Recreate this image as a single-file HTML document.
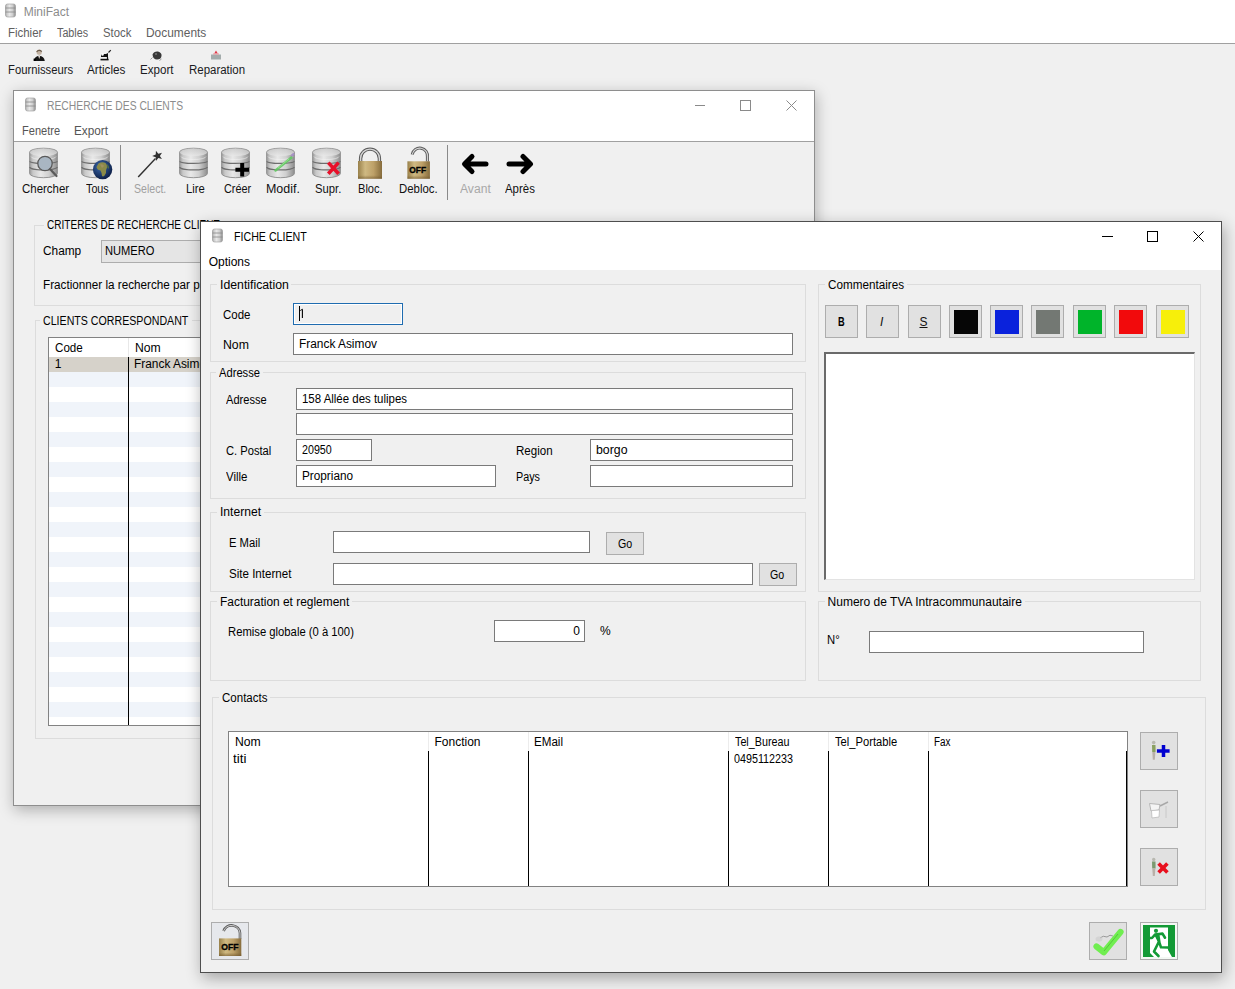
<!DOCTYPE html><html><head><meta charset="utf-8"><style>
html,body{margin:0;padding:0;width:1235px;height:989px;overflow:hidden;background:#f0f0f0;position:relative;font-family:"Liberation Sans",sans-serif}
div{position:absolute;box-sizing:border-box}
.t{white-space:nowrap;transform-origin:0 0}
svg{position:absolute;overflow:visible}
</style></head><body>
<svg width="0" height="0" style="position:absolute"><defs>
<linearGradient id="cyl" x1="0" x2="1" y1="0" y2="0">
<stop offset="0" stop-color="#9a9a9a"/><stop offset="0.12" stop-color="#c8c8c8"/><stop offset="0.4" stop-color="#e8e8e8"/><stop offset="0.7" stop-color="#cfcfcf"/><stop offset="1" stop-color="#8e8e8e"/></linearGradient>
<linearGradient id="cyltop" x1="0" x2="0" y1="0" y2="1">
<stop offset="0" stop-color="#c8c8c8"/><stop offset="1" stop-color="#e8e8e8"/></linearGradient>
<linearGradient id="gold" x1="0" x2="1" y1="0" y2="0">
<stop offset="0" stop-color="#98804a"/><stop offset="0.3" stop-color="#cfb982"/><stop offset="0.65" stop-color="#bda068"/><stop offset="1" stop-color="#866c3c"/></linearGradient>
<linearGradient id="goldv" x1="0" x2="0" y1="0" y2="1">
<stop offset="0" stop-color="#b8a068" stop-opacity="0"/><stop offset="0.8" stop-color="#7a6030" stop-opacity="0"/><stop offset="1" stop-color="#6a5028" stop-opacity="0.6"/></linearGradient>
<linearGradient id="shk" x1="0" x2="1" y1="0" y2="0">
<stop offset="0" stop-color="#6a6a6a"/><stop offset="0.5" stop-color="#d0d0d0"/><stop offset="1" stop-color="#5a5a5a"/></linearGradient>
<radialGradient id="globe" cx="0.4" cy="0.35" r="0.7">
<stop offset="0" stop-color="#3a6ab0"/><stop offset="1" stop-color="#0a1a40"/></radialGradient>
</defs></svg>
<div style="left:0px;top:0px;width:1235px;height:43px;background:#fff;"></div>
<div style="left:0px;top:43px;width:1235px;height:1px;background:#a0a0a0;"></div>
<svg style="left:5px;top:3px" width="12" height="15" viewBox="0 0 12 15"><rect x="0.5" y="1" width="10" height="13" rx="2" fill="url(#cyl)" stroke="#999" stroke-width="0.6"/><path d="M0.5,5 H10.5 M0.5,9 H10.5" stroke="#888" stroke-width="0.8"/></svg>
<div class="t" style="left:23.70px;top:6px;font-size:12px;line-height:12px;color:#8c8c8c;">MiniFact</div>
<div class="t" style="left:7.60px;top:27px;font-size:12px;line-height:12px;color:#606060;transform:scaleX(0.9528);">Fichier</div>
<div class="t" style="left:56.80px;top:27px;font-size:12px;line-height:12px;color:#606060;transform:scaleX(0.8963);">Tables</div>
<div class="t" style="left:102.60px;top:27px;font-size:12px;line-height:12px;color:#606060;transform:scaleX(0.9435);">Stock</div>
<div class="t" style="left:145.50px;top:27px;font-size:12px;line-height:12px;color:#606060;transform:scaleX(0.9934);">Documents</div>
<div class="t" style="left:7.60px;top:64px;font-size:12px;line-height:12px;color:#1a1a22;transform:scaleX(0.9395);">Fournisseurs</div>
<div class="t" style="left:87.40px;top:64px;font-size:12px;line-height:12px;color:#1a1a22;transform:scaleX(0.9771);">Articles</div>
<div class="t" style="left:140.40px;top:64px;font-size:12px;line-height:12px;color:#1a1a22;transform:scaleX(0.9654);">Export</div>
<div class="t" style="left:188.60px;top:64px;font-size:12px;line-height:12px;color:#1a1a22;transform:scaleX(0.9557);">Reparation</div>
<svg style="left:33px;top:49px" width="13" height="13" viewBox="0 0 13 13"><circle cx="6.2" cy="3.2" r="2.6" fill="#c4b4a4"/><path d="M3.6,2.8 Q6,0 8.8,2.6" stroke="#6a5a4a" stroke-width="1.2" fill="none"/><path d="M1,12 Q1.5,7 6.2,6.8 Q11,7 11.8,12 Z" fill="#151515"/><path d="M5.2,7 L6.2,10 L7.2,7 Z" fill="#e8e0d8"/><rect x="0.6" y="9.6" width="2.2" height="2.4" fill="#000"/></svg>
<svg style="left:100px;top:49px" width="13" height="13" viewBox="0 0 13 13"><path d="M1,5 H6 L8,4 L8,8 L1,8 Z" fill="#111"/><circle cx="2.5" cy="5.5" r="1.3" fill="#fff"/><path d="M0.5,10.6 H8.6" stroke="#111" stroke-width="1.6"/><path d="M7.5,8 L7.5,10.5" stroke="#111" stroke-width="1.2"/><path d="M8.5,3.5 L10.8,1.2" stroke="#222" stroke-width="1.2"/></svg>
<svg style="left:150px;top:50px" width="13" height="12" viewBox="0 0 13 12"><path d="M2.5,4.5 Q4,1 8,1.5 Q12,2.5 11.5,6 Q11,9.5 7,9.5 Q3,9.5 2.5,4.5 Z" fill="#383838"/><circle cx="6" cy="4" r="1" fill="#777"/><path d="M0.5,9.5 L2.5,7.5 M9.5,10.5 L11.5,9" stroke="#888" stroke-width="0.8"/></svg>
<svg style="left:210px;top:49px" width="13" height="12" viewBox="0 0 13 12"><path d="M1,5.5 H11 V10.5 H1 Z" fill="#a4acac"/><path d="M1,5.5 H11" stroke="#c8d0d0" stroke-width="1"/><path d="M4.2,4.5 L6,1.5 L7.8,4.5 Z" fill="#e03848"/><path d="M3,5 H9" stroke="#e89098" stroke-width="1"/></svg>
<div style="left:13px;top:90px;width:802px;height:716px;background:#f0f0f0;border:1px solid #8e8e8e;box-shadow:1px 4px 14px rgba(0,0,0,0.28);"></div>
<div style="left:14px;top:91px;width:800px;height:50px;background:#fff;"></div>
<div style="left:14px;top:141px;width:800px;height:1px;background:#a0a0a0;"></div>
<svg style="left:25px;top:97px" width="12" height="15" viewBox="0 0 12 15"><rect x="0.5" y="1" width="10" height="13" rx="2" fill="url(#cyl)" stroke="#999" stroke-width="0.6"/><path d="M0.5,5 H10.5 M0.5,9 H10.5" stroke="#888" stroke-width="0.8"/></svg>
<div class="t" style="left:46.90px;top:100px;font-size:12px;line-height:12px;color:#8c8c8c;transform:scaleX(0.8608);">RECHERCHE DES CLIENTS</div>
<div class="t" style="left:21.70px;top:125px;font-size:12px;line-height:12px;color:#555;transform:scaleX(0.9227);">Fenetre</div>
<div class="t" style="left:74.10px;top:125px;font-size:12px;line-height:12px;color:#555;transform:scaleX(0.9798);">Export</div>
<div style="left:695px;top:105px;width:10px;height:1px;background:#8a8a8a;"></div>
<div style="left:740px;top:100px;width:11px;height:11px;border:1px solid #8a8a8a;"></div>
<svg style="left:786px;top:100px" width="11" height="11" viewBox="0 0 11 11"><path d="M0.5,0.5 L10.5,10.5 M10.5,0.5 L0.5,10.5" stroke="#8a8a8a" stroke-width="1"/></svg>
<svg style="left:29px;top:148px" width="30" height="31" viewBox="0 0 30 31"><path d="M0.6,4.2 A13.9,4 0 0 1 28.4,4.2 V25.5 A13.9,4.2 0 0 1 0.6,25.5 Z" fill="url(#cyl)" stroke="#8c8c8c" stroke-width="0.9"/>
<ellipse cx="14.5" cy="4.3" rx="13.6" ry="3.7" fill="url(#cyltop)" opacity="0.75"/>
<path d="M0.8,13.2 A13.7,2.2 0 0 0 28.2,13.2" fill="none" stroke="#6e6e6e" stroke-width="1.2"/>
<path d="M0.8,19 A13.7,2.9 0 0 0 28.2,19" fill="none" stroke="#6e6e6e" stroke-width="1.2"/>
<path d="M2,8.5 A12.5,3 0 0 0 27,8.5" fill="none" stroke="#f4f4f4" stroke-width="0.8" opacity="0.7"/><circle cx="16" cy="15.5" r="7.2" fill="#a9b6c2" stroke="#5a5a5a" stroke-width="1.3"/><path d="M21,21 L27.5,28" stroke="#5a5a5a" stroke-width="2.2" stroke-linecap="round"/></svg>
<svg style="left:81px;top:148px" width="32" height="31" viewBox="0 0 32 31"><path d="M0.6,4.2 A13.9,4 0 0 1 28.4,4.2 V25.5 A13.9,4.2 0 0 1 0.6,25.5 Z" fill="url(#cyl)" stroke="#8c8c8c" stroke-width="0.9"/>
<ellipse cx="14.5" cy="4.3" rx="13.6" ry="3.7" fill="url(#cyltop)" opacity="0.75"/>
<path d="M0.8,13.2 A13.7,2.2 0 0 0 28.2,13.2" fill="none" stroke="#6e6e6e" stroke-width="1.2"/>
<path d="M0.8,19 A13.7,2.9 0 0 0 28.2,19" fill="none" stroke="#6e6e6e" stroke-width="1.2"/>
<path d="M2,8.5 A12.5,3 0 0 0 27,8.5" fill="none" stroke="#f4f4f4" stroke-width="0.8" opacity="0.7"/><circle cx="21.6" cy="21.6" r="9.7" fill="url(#globe)"/><path d="M17.5,15.5 Q21,13.5 24.5,15 Q26.5,17 26,19.5 Q24.5,22 25,25 Q23,29.5 21,28 Q20.5,24 19.5,22.5 Q16,22 15.5,19 Z" fill="#8a8a48"/><path d="M19,16.5 Q22,15.5 23,18 L21,20 Z" fill="#a09060"/><path d="M26,16 Q28.5,18 28,21 L26.5,19.5 Z" fill="#5a7a3a"/></svg>
<div style="left:120px;top:145px;width:1px;height:55px;background:#8a8a8a;"></div>
<svg style="left:137px;top:150px" width="27" height="28" viewBox="0 0 27 28"><path d="M1.2,27 L18.5,8.5" stroke="#303030" stroke-width="1.4"/><path d="M18.93,0.76 L21.31,3.71 L24.97,2.73 L22.90,5.90 L24.97,9.07 L21.31,8.09 L18.93,11.04 L18.74,7.25 L15.20,5.90 L18.74,4.55 Z" fill="#303030"/></svg>
<svg style="left:179px;top:148px" width="30" height="31" viewBox="0 0 30 31"><path d="M0.6,4.2 A13.9,4 0 0 1 28.4,4.2 V25.5 A13.9,4.2 0 0 1 0.6,25.5 Z" fill="url(#cyl)" stroke="#8c8c8c" stroke-width="0.9"/>
<ellipse cx="14.5" cy="4.3" rx="13.6" ry="3.7" fill="url(#cyltop)" opacity="0.75"/>
<path d="M0.8,13.2 A13.7,2.2 0 0 0 28.2,13.2" fill="none" stroke="#6e6e6e" stroke-width="1.2"/>
<path d="M0.8,19 A13.7,2.9 0 0 0 28.2,19" fill="none" stroke="#6e6e6e" stroke-width="1.2"/>
<path d="M2,8.5 A12.5,3 0 0 0 27,8.5" fill="none" stroke="#f4f4f4" stroke-width="0.8" opacity="0.7"/></svg>
<svg style="left:221px;top:148px" width="30" height="31" viewBox="0 0 30 31"><path d="M0.6,4.2 A13.9,4 0 0 1 28.4,4.2 V25.5 A13.9,4.2 0 0 1 0.6,25.5 Z" fill="url(#cyl)" stroke="#8c8c8c" stroke-width="0.9"/>
<ellipse cx="14.5" cy="4.3" rx="13.6" ry="3.7" fill="url(#cyltop)" opacity="0.75"/>
<path d="M0.8,13.2 A13.7,2.2 0 0 0 28.2,13.2" fill="none" stroke="#6e6e6e" stroke-width="1.2"/>
<path d="M0.8,19 A13.7,2.9 0 0 0 28.2,19" fill="none" stroke="#6e6e6e" stroke-width="1.2"/>
<path d="M2,8.5 A12.5,3 0 0 0 27,8.5" fill="none" stroke="#f4f4f4" stroke-width="0.8" opacity="0.7"/><path d="M14.4,21.8 H28 M21.2,15 V28.6" stroke="#000" stroke-width="4"/></svg>
<svg style="left:266px;top:148px" width="30" height="31" viewBox="0 0 30 31"><path d="M0.6,4.2 A13.9,4 0 0 1 28.4,4.2 V25.5 A13.9,4.2 0 0 1 0.6,25.5 Z" fill="url(#cyl)" stroke="#8c8c8c" stroke-width="0.9"/>
<ellipse cx="14.5" cy="4.3" rx="13.6" ry="3.7" fill="url(#cyltop)" opacity="0.75"/>
<path d="M0.8,13.2 A13.7,2.2 0 0 0 28.2,13.2" fill="none" stroke="#6e6e6e" stroke-width="1.2"/>
<path d="M0.8,19 A13.7,2.9 0 0 0 28.2,19" fill="none" stroke="#6e6e6e" stroke-width="1.2"/>
<path d="M2,8.5 A12.5,3 0 0 0 27,8.5" fill="none" stroke="#f4f4f4" stroke-width="0.8" opacity="0.7"/><path d="M9.5,22.5 L25.5,9.5" stroke="#62c862" stroke-width="2.4" stroke-linecap="round" opacity="0.9"/><path d="M12,20 L23,11" stroke="#a8f0a0" stroke-width="0.8" opacity="0.8"/><path d="M25.5,8 L28,5.5" stroke="#a890c8" stroke-width="2.2"/></svg>
<svg style="left:312px;top:148px" width="30" height="31" viewBox="0 0 30 31"><path d="M0.6,4.2 A13.9,4 0 0 1 28.4,4.2 V25.5 A13.9,4.2 0 0 1 0.6,25.5 Z" fill="url(#cyl)" stroke="#8c8c8c" stroke-width="0.9"/>
<ellipse cx="14.5" cy="4.3" rx="13.6" ry="3.7" fill="url(#cyltop)" opacity="0.75"/>
<path d="M0.8,13.2 A13.7,2.2 0 0 0 28.2,13.2" fill="none" stroke="#6e6e6e" stroke-width="1.2"/>
<path d="M0.8,19 A13.7,2.9 0 0 0 28.2,19" fill="none" stroke="#6e6e6e" stroke-width="1.2"/>
<path d="M2,8.5 A12.5,3 0 0 0 27,8.5" fill="none" stroke="#f4f4f4" stroke-width="0.8" opacity="0.7"/><path d="M16.3,14.6 L26.6,25.8 M26.6,14.6 L16.3,25.8" stroke="#e8102a" stroke-width="3.6"/></svg>
<svg style="left:357px;top:147px" width="26" height="33" viewBox="0 0 26 33"><path d="M3.6,14.5 V11.5 A9.4,9.4 0 0 1 22.4,11.5 V14.5" fill="none" stroke="#5a5a5a" stroke-width="3.4"/><path d="M3.6,14.5 V11.5 A9.4,9.4 0 0 1 22.4,11.5 V14.5" fill="none" stroke="#d8d8d8" stroke-width="1.4"/><rect x="1" y="14" width="24" height="17.7" fill="url(#gold)"/><rect x="1" y="14" width="24" height="17.7" fill="url(#goldv)"/></svg>
<svg style="left:406px;top:147px" width="26" height="33" viewBox="0 0 26 33"><path d="M6.2,7.5 A7.7,7.7 0 0 1 21.4,10.2 V14.5" fill="none" stroke="#5a5a5a" stroke-width="3"/><path d="M6.2,7.5 A7.7,7.7 0 0 1 21.4,10.2 V14.5" fill="none" stroke="#d8d8d8" stroke-width="1.1"/><rect x="1.4" y="14.3" width="22.5" height="17.4" fill="url(#gold)"/><rect x="1.4" y="14.3" width="22.5" height="17.4" fill="url(#goldv)"/><text x="11.7" y="25.9" text-anchor="middle" font-family="Liberation Sans" font-weight="bold" font-size="8.4" fill="#000" stroke="#000" stroke-width="0.35">OFF</text></svg>
<div style="left:447px;top:145px;width:1px;height:55px;background:#8a8a8a;"></div>
<svg style="left:460px;top:153px" width="30" height="23" viewBox="0 0 30 23"><path d="M26,11 H6 M12,3.5 L4.5,11 L12,18.5" fill="none" stroke="#000" stroke-width="5" stroke-linecap="round" stroke-linejoin="round"/></svg>
<svg style="left:505px;top:153px" width="30" height="23" viewBox="0 0 30 23"><path d="M4,11 H24 M18,3.5 L25.5,11 L18,18.5" fill="none" stroke="#000" stroke-width="5" stroke-linecap="round" stroke-linejoin="round"/></svg>
<div class="t" style="left:21.80px;top:183px;font-size:12px;line-height:12px;color:#111;transform:scaleX(0.9555);">Chercher</div>
<div class="t" style="left:86.20px;top:183px;font-size:12px;line-height:12px;color:#111;transform:scaleX(0.8972);">Tous</div>
<div class="t" style="left:133.50px;top:183px;font-size:12px;line-height:12px;color:#a0a0a0;transform:scaleX(0.8801);">Select.</div>
<div class="t" style="left:185.50px;top:183px;font-size:12px;line-height:12px;color:#111;transform:scaleX(0.9400);">Lire</div>
<div class="t" style="left:223.80px;top:183px;font-size:12px;line-height:12px;color:#111;transform:scaleX(0.9067);">Créer</div>
<div class="t" style="left:265.60px;top:183px;font-size:12px;line-height:12px;color:#111;transform:scaleX(1.0367);">Modif.</div>
<div class="t" style="left:314.50px;top:183px;font-size:12px;line-height:12px;color:#111;transform:scaleX(0.9393);">Supr.</div>
<div class="t" style="left:357.60px;top:183px;font-size:12px;line-height:12px;color:#111;transform:scaleX(0.9251);">Bloc.</div>
<div class="t" style="left:398.70px;top:183px;font-size:12px;line-height:12px;color:#111;transform:scaleX(0.9484);">Debloc.</div>
<div class="t" style="left:460.00px;top:183px;font-size:12px;line-height:12px;color:#a8a8a8;transform:scaleX(1.0098);">Avant</div>
<div class="t" style="left:505.40px;top:183px;font-size:12px;line-height:12px;color:#111;transform:scaleX(0.9521);">Après</div>
<div style="left:34px;top:225px;width:777px;height:81px;border:1px solid #dcdcdc;"></div>
<div style="left:43.7px;top:223px;width:178.5px;height:5px;background:#f0f0f0;"></div>
<div class="t" style="left:46.70px;top:219px;font-size:12px;line-height:12px;color:#000;transform:scaleX(0.8374);">CRITERES DE RECHERCHE CLIENT</div>
<div class="t" style="left:42.50px;top:245px;font-size:12px;line-height:12px;color:#000;transform:scaleX(0.9871);">Champ</div>
<div style="left:101px;top:240px;width:300px;height:23px;background:#e5e5e5;border:1px solid #adadad;"></div>
<div class="t" style="left:105.30px;top:245px;font-size:12px;line-height:12px;color:#000;transform:scaleX(0.9268);">NUMERO</div>
<div class="t" style="left:42.50px;top:279px;font-size:12px;line-height:12px;color:#000;transform:scaleX(0.9751);">Fractionner la recherche par page</div>
<div style="left:35px;top:320px;width:776px;height:419px;border:1px solid #dcdcdc;"></div>
<div style="left:40.4px;top:318px;width:151.3px;height:5px;background:#f0f0f0;"></div>
<div class="t" style="left:43.40px;top:315px;font-size:12px;line-height:12px;color:#000;transform:scaleX(0.8860);">CLIENTS CORRESPONDANT</div>
<div style="left:48px;top:337px;width:600px;height:389px;background:#fff;border:1px solid #828282;"></div>
<div style="left:49px;top:357px;width:500px;height:15px;background:#d6d2ca;"></div>
<div style="left:49px;top:372px;width:500px;height:15px;background:#f0f4fa;"></div>
<div style="left:49px;top:402px;width:500px;height:15px;background:#f0f4fa;"></div>
<div style="left:49px;top:432px;width:500px;height:15px;background:#f0f4fa;"></div>
<div style="left:49px;top:462px;width:500px;height:15px;background:#f0f4fa;"></div>
<div style="left:49px;top:492px;width:500px;height:15px;background:#f0f4fa;"></div>
<div style="left:49px;top:522px;width:500px;height:15px;background:#f0f4fa;"></div>
<div style="left:49px;top:552px;width:500px;height:15px;background:#f0f4fa;"></div>
<div style="left:49px;top:582px;width:500px;height:15px;background:#f0f4fa;"></div>
<div style="left:49px;top:612px;width:500px;height:15px;background:#f0f4fa;"></div>
<div style="left:49px;top:642px;width:500px;height:15px;background:#f0f4fa;"></div>
<div style="left:49px;top:672px;width:500px;height:15px;background:#f0f4fa;"></div>
<div style="left:49px;top:702px;width:500px;height:15px;background:#f0f4fa;"></div>
<div style="left:49px;top:725px;width:500px;height:1px;background:#828282;"></div>
<div style="left:128px;top:357px;width:1px;height:368px;background:#000;"></div>
<div style="left:128px;top:338px;width:1px;height:19px;background:#e8e8e8;"></div>
<div class="t" style="left:54.50px;top:342px;font-size:12px;line-height:12px;color:#000;transform:scaleX(0.9686);">Code</div>
<div class="t" style="left:134.50px;top:342px;font-size:12px;line-height:12px;color:#000;transform:scaleX(1.0158);">Nom</div>
<div class="t" style="left:54.80px;top:358px;font-size:12px;line-height:12px;color:#000;">1</div>
<div class="t" style="left:133.60px;top:358px;font-size:12px;line-height:12px;color:#000;transform:scaleX(0.9911);">Franck Asimov</div>
<div style="left:200px;top:221px;width:1022px;height:752px;background:#f0f0f0;border:1px solid #4e4e4e;box-shadow:2px 5px 15px rgba(0,0,0,0.32);"></div>
<div style="left:201px;top:222px;width:1020px;height:48px;background:#fff;"></div>
<svg style="left:212px;top:228px" width="12" height="15" viewBox="0 0 12 15"><rect x="0.5" y="1" width="10" height="13" rx="2" fill="url(#cyl)" stroke="#999" stroke-width="0.6"/><path d="M0.5,5 H10.5 M0.5,9 H10.5" stroke="#888" stroke-width="0.8"/></svg>
<div class="t" style="left:233.70px;top:231px;font-size:12px;line-height:12px;color:#000;transform:scaleX(0.8878);">FICHE CLIENT</div>
<div class="t" style="left:208.70px;top:256px;font-size:12px;line-height:12px;color:#000;">Options</div>
<div style="left:1102px;top:236px;width:11px;height:1px;background:#000;"></div>
<div style="left:1147px;top:231px;width:11px;height:11px;border:1px solid #000;"></div>
<svg style="left:1193px;top:231px" width="11" height="11" viewBox="0 0 11 11"><path d="M0.5,0.5 L10.5,10.5 M10.5,0.5 L0.5,10.5" stroke="#000" stroke-width="1"/></svg>
<div style="left:210px;top:284px;width:596px;height:78px;border:1px solid #dcdcdc;"></div>
<div style="left:216.5px;top:282px;width:74.9px;height:5px;background:#f0f0f0;"></div>
<div class="t" style="left:219.50px;top:279px;font-size:12px;line-height:12px;color:#000;transform:scaleX(1.0223);">Identification</div>
<div class="t" style="left:222.60px;top:309px;font-size:12px;line-height:12px;color:#000;transform:scaleX(0.9547);">Code</div>
<div style="left:293px;top:303px;width:110px;height:22px;border:1px solid #1f6cb0;background:#efefef;"></div>
<div style="left:294px;top:304px;width:108px;height:20px;border:1px solid #fff;"></div>
<div style="left:299px;top:306px;width:1px;height:15px;background:#000;"></div>
<svg style="left:299px;top:308px" width="6" height="11" viewBox="0 0 6 11"><path d="M3.4,1.3 V10" stroke="#000" stroke-width="1.1"/><path d="M1.2,2.6 L3.4,1.2" stroke="#000" stroke-width="0.9"/></svg>
<div class="t" style="left:222.60px;top:339px;font-size:12px;line-height:12px;color:#000;transform:scaleX(1.0237);">Nom</div>
<div style="left:293px;top:333px;width:500px;height:22px;border:1px solid #7a7a7a;background:#fff;"></div>
<div class="t" style="left:299.00px;top:338px;font-size:12px;line-height:12px;color:#000;transform:scaleX(0.9911);">Franck Asimov</div>
<div style="left:818px;top:284px;width:383px;height:308px;border:1px solid #dcdcdc;"></div>
<div style="left:824.5px;top:282px;width:82px;height:5px;background:#f0f0f0;"></div>
<div class="t" style="left:827.50px;top:279px;font-size:12px;line-height:12px;color:#000;transform:scaleX(0.9744);">Commentaires</div>
<div style="left:825px;top:305px;width:33px;height:33px;border:1px solid #adadad;background:#e1e1e1;"></div>
<div style="left:866px;top:305px;width:33px;height:33px;border:1px solid #adadad;background:#e1e1e1;"></div>
<div style="left:908px;top:305px;width:33px;height:33px;border:1px solid #adadad;background:#e1e1e1;"></div>
<div style="left:949px;top:305px;width:33px;height:33px;border:1px solid #adadad;background:#e1e1e1;"></div>
<div style="left:954px;top:310px;width:24px;height:24px;background:#060606;"></div>
<div style="left:990px;top:305px;width:33px;height:33px;border:1px solid #adadad;background:#e1e1e1;"></div>
<div style="left:995px;top:310px;width:24px;height:24px;background:#0a22dc;"></div>
<div style="left:1031px;top:305px;width:33px;height:33px;border:1px solid #adadad;background:#e1e1e1;"></div>
<div style="left:1036px;top:310px;width:24px;height:24px;background:#737873;"></div>
<div style="left:1073px;top:305px;width:33px;height:33px;border:1px solid #adadad;background:#e1e1e1;"></div>
<div style="left:1078px;top:310px;width:24px;height:24px;background:#00b42a;"></div>
<div style="left:1114px;top:305px;width:33px;height:33px;border:1px solid #adadad;background:#e1e1e1;"></div>
<div style="left:1119px;top:310px;width:24px;height:24px;background:#f20a0c;"></div>
<div style="left:1156px;top:305px;width:33px;height:33px;border:1px solid #adadad;background:#e1e1e1;"></div>
<div style="left:1161px;top:310px;width:24px;height:24px;background:#f7ef0a;"></div>
<div class="t" style="left:837.80px;top:316px;font-size:12px;line-height:12px;color:#000;font-weight:bold;transform:scaleX(0.7701);">B</div>
<div class="t" style="left:880px;top:316px;font-size:12px;line-height:12px;font-style:italic;color:#111">I</div>
<div class="t" style="left:919.5px;top:316px;font-size:12px;line-height:12px;color:#111;text-decoration:underline">S</div>
<div style="left:824px;top:352px;width:371px;height:228px;background:#fff;border:1px solid #e3e3e3;border-left:2px solid #6a6a6a;border-top:2px solid #6a6a6a;"></div>
<div style="left:210px;top:372px;width:596px;height:127px;border:1px solid #dcdcdc;"></div>
<div style="left:216.2px;top:370px;width:47px;height:5px;background:#f0f0f0;"></div>
<div class="t" style="left:219.20px;top:367px;font-size:12px;line-height:12px;color:#000;transform:scaleX(0.9318);">Adresse</div>
<div class="t" style="left:225.50px;top:394px;font-size:12px;line-height:12px;color:#000;transform:scaleX(0.9227);">Adresse</div>
<div style="left:296px;top:388px;width:497px;height:22px;border:1px solid #7a7a7a;background:#fff;"></div>
<div class="t" style="left:302.30px;top:393px;font-size:12px;line-height:12px;color:#000;transform:scaleX(0.9537);">158 Allée des tulipes</div>
<div style="left:296px;top:413px;width:497px;height:22px;border:1px solid #7a7a7a;background:#fff;"></div>
<div class="t" style="left:225.50px;top:445px;font-size:12px;line-height:12px;color:#000;transform:scaleX(0.9302);">C. Postal</div>
<div style="left:296px;top:439px;width:76px;height:22px;border:1px solid #7a7a7a;background:#fff;"></div>
<div class="t" style="left:302.30px;top:444px;font-size:12px;line-height:12px;color:#000;transform:scaleX(0.8922);">20950</div>
<div class="t" style="left:225.50px;top:471px;font-size:12px;line-height:12px;color:#000;transform:scaleX(0.9556);">Ville</div>
<div style="left:296px;top:465px;width:200px;height:22px;border:1px solid #7a7a7a;background:#fff;"></div>
<div class="t" style="left:302.30px;top:470px;font-size:12px;line-height:12px;color:#000;transform:scaleX(0.9808);">Propriano</div>
<div class="t" style="left:516.20px;top:445px;font-size:12px;line-height:12px;color:#000;transform:scaleX(0.9632);">Region</div>
<div style="left:590px;top:439px;width:203px;height:22px;border:1px solid #7a7a7a;background:#fff;"></div>
<div class="t" style="left:596.20px;top:444px;font-size:12px;line-height:12px;color:#000;transform:scaleX(1.0261);">borgo</div>
<div class="t" style="left:516.20px;top:471px;font-size:12px;line-height:12px;color:#000;transform:scaleX(0.8989);">Pays</div>
<div style="left:590px;top:465px;width:203px;height:22px;border:1px solid #7a7a7a;background:#fff;"></div>
<div style="left:210px;top:512px;width:596px;height:80px;border:1px solid #dcdcdc;"></div>
<div style="left:216.5px;top:510px;width:47px;height:5px;background:#f0f0f0;"></div>
<div class="t" style="left:219.50px;top:506px;font-size:12px;line-height:12px;color:#000;transform:scaleX(1.0074);">Internet</div>
<div class="t" style="left:228.60px;top:537px;font-size:12px;line-height:12px;color:#000;transform:scaleX(0.9369);">E Mail</div>
<div style="left:333px;top:531px;width:257px;height:22px;border:1px solid #7a7a7a;background:#fff;"></div>
<div style="left:606px;top:532px;width:38px;height:23px;border:1px solid #adadad;background:#e1e1e1;"></div>
<div class="t" style="left:617.60px;top:538px;font-size:12px;line-height:12px;color:#000;transform:scaleX(0.8875);">Go</div>
<div class="t" style="left:228.60px;top:568px;font-size:12px;line-height:12px;color:#000;transform:scaleX(0.9645);">Site Internet</div>
<div style="left:333px;top:563px;width:420px;height:22px;border:1px solid #7a7a7a;background:#fff;"></div>
<div style="left:759px;top:563px;width:38px;height:23px;border:1px solid #adadad;background:#e1e1e1;"></div>
<div class="t" style="left:770.40px;top:569px;font-size:12px;line-height:12px;color:#000;transform:scaleX(0.8875);">Go</div>
<div style="left:210px;top:601px;width:596px;height:80px;border:1px solid #dcdcdc;"></div>
<div style="left:216.5px;top:599px;width:135.3px;height:5px;background:#f0f0f0;"></div>
<div class="t" style="left:219.50px;top:596px;font-size:12px;line-height:12px;color:#000;transform:scaleX(0.9939);">Facturation et reglement</div>
<div class="t" style="left:228.40px;top:626px;font-size:12px;line-height:12px;color:#000;transform:scaleX(0.9389);">Remise globale (0 à 100)</div>
<div style="left:494px;top:620px;width:91px;height:22px;border:1px solid #7a7a7a;background:#fff;"></div>
<div class="t" style="left:573.30px;top:625px;font-size:12px;line-height:12px;color:#000;">0</div>
<div class="t" style="left:600.00px;top:625px;font-size:12px;line-height:12px;color:#000;">%</div>
<div style="left:818px;top:601px;width:383px;height:80px;border:1px solid #dcdcdc;"></div>
<div style="left:824.6px;top:599px;width:200.5px;height:5px;background:#f0f0f0;"></div>
<div class="t" style="left:827.60px;top:596px;font-size:12px;line-height:12px;color:#000;">Numero de TVA Intracommunautaire</div>
<div class="t" style="left:826.60px;top:634px;font-size:12px;line-height:12px;color:#000;transform:scaleX(0.9407);">N°</div>
<div style="left:869px;top:631px;width:275px;height:22px;border:1px solid #7a7a7a;background:#fff;"></div>
<div style="left:212px;top:697px;width:994px;height:213px;border:1px solid #dcdcdc;"></div>
<div style="left:218.5px;top:695px;width:51.5px;height:5px;background:#f0f0f0;"></div>
<div class="t" style="left:221.50px;top:692px;font-size:12px;line-height:12px;color:#000;transform:scaleX(0.9599);">Contacts</div>
<div style="left:228px;top:731px;width:900px;height:156px;background:#fff;border:1px solid #828282;"></div>
<div style="left:428px;top:751px;width:1px;height:135px;background:#000;"></div>
<div style="left:428px;top:732px;width:1px;height:19px;background:#ececec;"></div>
<div style="left:528px;top:751px;width:1px;height:135px;background:#000;"></div>
<div style="left:528px;top:732px;width:1px;height:19px;background:#ececec;"></div>
<div style="left:728px;top:751px;width:1px;height:135px;background:#000;"></div>
<div style="left:728px;top:732px;width:1px;height:19px;background:#ececec;"></div>
<div style="left:828px;top:751px;width:1px;height:135px;background:#000;"></div>
<div style="left:828px;top:732px;width:1px;height:19px;background:#ececec;"></div>
<div style="left:928px;top:751px;width:1px;height:135px;background:#000;"></div>
<div style="left:928px;top:732px;width:1px;height:19px;background:#ececec;"></div>
<div style="left:1126px;top:751px;width:1px;height:135px;background:#000;"></div>
<div class="t" style="left:234.80px;top:736px;font-size:12px;line-height:12px;color:#000;transform:scaleX(1.0158);">Nom</div>
<div class="t" style="left:434.50px;top:736px;font-size:12px;line-height:12px;color:#000;">Fonction</div>
<div class="t" style="left:534.30px;top:736px;font-size:12px;line-height:12px;color:#000;transform:scaleX(0.9667);">EMail</div>
<div class="t" style="left:735.20px;top:736px;font-size:12px;line-height:12px;color:#000;transform:scaleX(0.8962);">Tel_Bureau</div>
<div class="t" style="left:834.70px;top:736px;font-size:12px;line-height:12px;color:#000;transform:scaleX(0.9310);">Tel_Portable</div>
<div class="t" style="left:934.30px;top:736px;font-size:12px;line-height:12px;color:#000;transform:scaleX(0.8250);">Fax</div>
<div class="t" style="left:233.30px;top:753px;font-size:12px;line-height:12px;color:#000;transform:scaleX(1.1167);">titi</div>
<div class="t" style="left:733.50px;top:753px;font-size:12px;line-height:12px;color:#000;transform:scaleX(0.8951);">0495112233</div>
<div style="left:1140px;top:732px;width:38px;height:38px;border:1px solid #adadad;background:#e1e1e1;"></div>
<div style="left:1140px;top:790px;width:38px;height:38px;border:1px solid #adadad;background:#e1e1e1;"></div>
<div style="left:1140px;top:848px;width:38px;height:38px;border:1px solid #adadad;background:#e1e1e1;"></div>
<svg style="left:1148px;top:740px" width="24" height="22" viewBox="0 0 24 22"><circle cx="5.7" cy="2.6" r="1.8" fill="#b8b8b0"/><path d="M4,5 L7.5,5 L7.6,12 L4.2,12 Z" fill="#8aa060"/><path d="M4.3,12 L7.4,12 L6.8,19.7 L4.8,19.7 Z" fill="#b8b0a8"/><path d="M8.9,11.1 H21.6 M15.5,4.9 V17" stroke="#0000d0" stroke-width="3.5"/></svg>
<svg style="left:1148px;top:798px" width="24" height="24" viewBox="0 0 24 24"><path d="M1.5,5.5 L12,6.5 L11,12 L3,13 Z" fill="#f4f4f4" stroke="#b0b0b0" stroke-width="0.9"/><path d="M3.5,12.5 L4,20 L11,19 L11.5,12 Z" fill="#fff" stroke="#bbb" stroke-width="0.8"/><path d="M12,8 L20,4" stroke="#a8a8a8" stroke-width="1.5"/><path d="M18,8 V20" stroke="#c8c8c8" stroke-width="1"/></svg>
<svg style="left:1148px;top:856px" width="24" height="22" viewBox="0 0 24 22"><circle cx="5.7" cy="3.5" r="1.7" fill="#b8b8b0"/><path d="M4,5.5 L7.5,5.5 L7.6,12.5 L4.2,12.5 Z" fill="#7a9a70"/><path d="M4.3,12.5 L7.4,12.5 L6.8,20 L4.8,20 Z" fill="#b8b0a8"/><path d="M10.6,7.4 L19.4,16.6 M19.4,7.4 L10.6,16.6" stroke="#e8101e" stroke-width="3.6"/></svg>
<div style="left:211px;top:922px;width:38px;height:38px;border:1px solid #adadad;background:#e6e8ec;"></div>
<svg style="left:217px;top:922px" width="27" height="36" viewBox="0 0 27 36"><path d="M6.6,9 A8.4,8 0 0 1 23,11 V17" fill="none" stroke="#5a5a5a" stroke-width="2.6"/><path d="M6.6,9 A8.4,8 0 0 1 23,11 V17" fill="none" stroke="#d8d8d8" stroke-width="0.9"/><rect x="2" y="16.4" width="22.3" height="17.6" fill="url(#gold)"/><rect x="2" y="16.4" width="22.3" height="17.6" fill="url(#goldv)"/><text x="12.8" y="28.4" text-anchor="middle" font-family="Liberation Sans" font-weight="bold" font-size="8.6" fill="#000" stroke="#000" stroke-width="0.35">OFF</text></svg>
<div style="left:1089px;top:922px;width:38px;height:38px;border:1px solid #adadad;background:#e1e1e1;"></div>
<svg style="left:1091px;top:925px" width="34" height="32" viewBox="0 0 34 32"><path d="M9,13 Q12,10 16,12 Q19,9 22,11" fill="none" stroke="#999" stroke-width="1"/><ellipse cx="8" cy="14" rx="3.5" ry="2.5" fill="#ccc" opacity="0.6"/><path d="M5.5,21.5 L12.8,27.2 L29.5,7" fill="none" stroke="#70ee50" stroke-width="6.2" stroke-linejoin="round" stroke-linecap="round"/><path d="M13,26 L27,9" stroke="#3a9a2a" stroke-width="0.8" opacity="0.6"/></svg>
<div style="left:1140px;top:922px;width:38px;height:38px;border:1px solid #adadad;background:#f4f8f4;"></div>
<svg style="left:1143px;top:925px" width="32" height="32" viewBox="0 0 32 32"><rect x="0" y="0" width="32" height="32" fill="#139a36"/><path d="M7,2.6 H25 V25 L29,32 H11 L7,28 Z" fill="#fff"/><circle cx="13" cy="5.8" r="2.1" fill="#139a36"/><path d="M7,13 L9,13 L12,9.6 L16,9 L19.5,8.6 L22,12.7 M12.5,9.5 L16,16.5 L11,26.5 L15.5,31 M16,16.5 L18,22.3 L25,22.5 L27,24" fill="none" stroke="#139a36" stroke-width="2.6" stroke-linejoin="round" stroke-linecap="round"/><path d="M12,9.5 L16.5,9 L17.5,16.5 L15,17 Z" fill="#139a36"/></svg>
</body></html>
